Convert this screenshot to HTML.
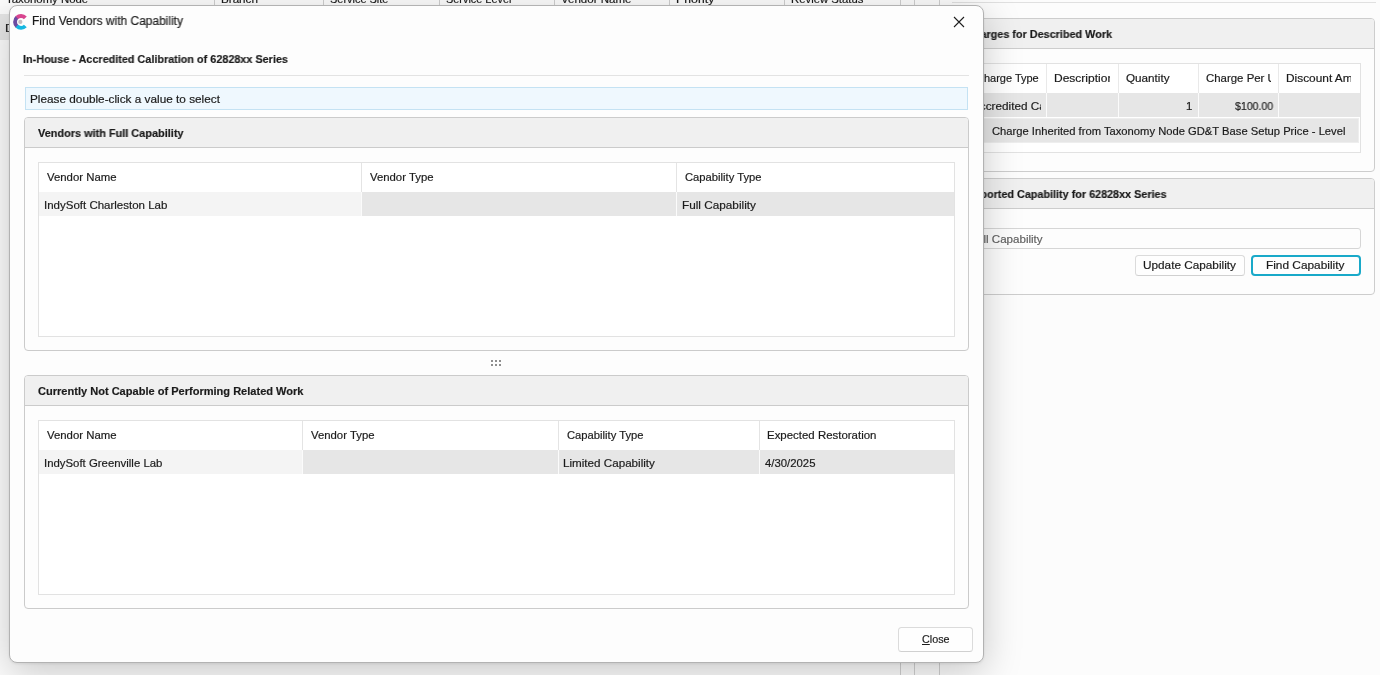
<!DOCTYPE html>
<html><head><meta charset="utf-8">
<style>
*{box-sizing:border-box;margin:0;padding:0}
html,body{width:1380px;height:675px;overflow:hidden;background:#fcfcfc}
body{font-family:"Liberation Sans",sans-serif;font-size:12px;color:#1b1b1b;position:relative}
.abs{position:absolute}
.t{position:absolute;white-space:pre;line-height:16px;height:16px;transform-origin:0 50%;will-change:transform;-webkit-text-stroke:0.18px currentColor}
.clip{position:absolute;height:16px;overflow:hidden}
.bgpanel{position:absolute;border:1px solid #cdcdcd;border-radius:4px;background:#fdfdfd;overflow:hidden}
.bghead{position:absolute;left:0;right:0;top:0;background:#f0f0f0;border-bottom:1px solid #cdcdcd}
#dlg{position:absolute;left:9px;top:5px;width:975px;height:658px;background:#fdfdfd;border:1px solid #b2b2b2;border-radius:8px;box-shadow:0 9px 38px rgba(0,0,0,.21),0 1px 3px rgba(0,0,0,.08)}
.grp{position:absolute;border:1px solid #cbcbcb;border-radius:4px;background:#fdfdfd;overflow:hidden}
.grph{position:absolute;left:0;right:0;top:0;height:30px;background:#f0f0f0;border-bottom:1px solid #cbcbcb}
.grid{position:absolute;border:1px solid #e2e2e2;background:#fff}
.cell{position:absolute;background:#e6e6e6}
.vl{position:absolute;width:1px;background:#e4e4e4}
.btn{position:absolute;border:1px solid #dbdbdb;border-bottom-color:#d0d0d0;border-radius:3.5px;background:#fefefe}
</style></head><body>

<!-- background window: top strip -->
<div class="abs" style="left:0;top:0;width:901px;height:6px;background:#fdfdfd"></div>
<div class="vl" style="left:214px;top:0;height:6px;background:#d0d0d0"></div>
<div class="vl" style="left:323px;top:0;height:6px;background:#d0d0d0"></div>
<div class="vl" style="left:439px;top:0;height:6px;background:#d0d0d0"></div>
<div class="vl" style="left:554px;top:0;height:6px;background:#d0d0d0"></div>
<div class="vl" style="left:669px;top:0;height:6px;background:#d0d0d0"></div>
<div class="vl" style="left:784px;top:0;height:6px;background:#d0d0d0"></div>
<div class="vl" style="left:900px;top:0;height:675px;background:#d0d0d0"></div>
<div class="vl" style="left:914px;top:0;height:675px;background:#d0d0d0"></div>
<div class="vl" style="left:939px;top:0;height:675px;background:#d0d0d0"></div>
<div class="abs" style="left:0;top:14px;width:12px;height:26px;background:#e6e6e6"></div>
<div class="abs" style="left:952px;top:2px;width:424px;height:1px;background:#e0e0e0"></div>

<!-- right panels -->
<div class="bgpanel" style="left:940px;top:18px;width:435px;height:154px"><div class="bghead" style="height:30px"></div></div>
<div class="grid" style="left:940px;top:63px;width:421px;height:90px"></div>
<div class="cell" style="left:941px;top:93px;width:419px;height:24px"></div>
<div class="cell" style="left:941px;top:118px;width:418px;height:25px;border:1px solid #eee"></div>
<div class="vl" style="left:1046px;top:64px;height:29px;background:#e9e9e9"></div><div class="vl" style="left:1046px;top:93px;height:24px;background:#fbfbfb"></div>
<div class="vl" style="left:1118px;top:64px;height:29px;background:#e9e9e9"></div><div class="vl" style="left:1118px;top:93px;height:24px;background:#fbfbfb"></div>
<div class="vl" style="left:1198px;top:64px;height:29px;background:#e9e9e9"></div><div class="vl" style="left:1198px;top:93px;height:24px;background:#fbfbfb"></div>
<div class="vl" style="left:1278px;top:64px;height:29px;background:#e9e9e9"></div><div class="vl" style="left:1278px;top:93px;height:24px;background:#fbfbfb"></div>

<div class="bgpanel" style="left:940px;top:178px;width:435px;height:117px"><div class="bghead" style="height:30px"></div></div>
<div class="abs" style="left:940px;top:228px;width:421px;height:21px;border:1px solid #d6d6d6;border-radius:3px;background:#fdfdfd"></div>
<div class="btn" style="left:1135px;top:255px;width:110px;height:21px"></div>
<div class="btn" style="left:1251px;top:255px;width:110px;height:21px;border:2px solid #19a9c9;border-radius:4px"></div>
<div class="t" style="left:5.60px;top:-9.00px;font-size:10.7px;transform:scaleX(1.0630)">Taxonomy Node</div>
<div class="t" style="left:221.30px;top:-9.00px;font-size:10.7px;transform:scaleX(1.0893)">Branch</div>
<div class="t" style="left:330.30px;top:-9.00px;font-size:10.7px;transform:scaleX(1.0240)">Service Site</div>
<div class="t" style="left:446.30px;top:-9.00px;font-size:10.7px;transform:scaleX(1.0191)">Service Level</div>
<div class="t" style="left:561.30px;top:-9.00px;font-size:10.7px;transform:scaleX(1.0771)">Vendor Name</div>
<div class="t" style="left:676.30px;top:-9.00px;font-size:10.7px;transform:scaleX(1.1543)">Priority</div>
<div class="t" style="left:791.30px;top:-9.00px;font-size:10.7px;transform:scaleX(1.0598)">Review Status</div>
<div class="t" style="left:5.30px;top:20.00px;font-size:10.7px;transform:scaleX(1.2178)">D</div>
<div class="t" style="left:966.30px;top:26.00px;font-size:11px;transform:scaleX(0.9842);font-weight:700">Charges for Described Work</div>
<div class="t" style="left:975.60px;top:70.00px;font-size:10.7px;transform:scaleX(1.0279)">Charge Type</div>
<div class="clip" style="left:1046px;width:64.29999999999995px;top:70.00px"><div class="t" style="left:7.60px;top:0;font-size:10.7px;transform:scaleX(1.1240)">Description</div></div>
<div class="t" style="left:1126.22px;top:70.00px;font-size:10.7px;transform:scaleX(1.0946)">Quantity</div>
<div class="clip" style="left:1198px;width:72.5px;top:70.00px"><div class="t" style="left:7.80px;top:0;font-size:10.7px;transform:scaleX(1.0686)">Charge Per Unit</div></div>
<div class="clip" style="left:1278px;width:73px;top:70.00px"><div class="t" style="left:7.90px;top:0;font-size:10.7px;transform:scaleX(1.1114)">Discount Amount</div></div>
<div class="clip" style="left:940px;width:101px;top:98.00px"><div class="t" style="left:31.80px;top:0;font-size:10.7px;transform:scaleX(1.0989)">Accredited Calibration</div></div>
<div class="t" style="left:1186.36px;top:98.00px;font-size:10.7px;transform:scaleX(1.0683)">1</div>
<div class="t" style="left:1235.18px;top:98.00px;font-size:10.7px;transform:scaleX(0.9850)">$100.00</div>
<div class="t" style="left:992.26px;top:123.00px;font-size:10.7px;transform:scaleX(1.0487)">Charge Inherited from Taxonomy Node GD&amp;T Base Setup Price - Level</div>
<div class="t" style="left:959.80px;top:186.00px;font-size:11px;transform:scaleX(0.9823);font-weight:700">Supported Capability for 62828xx Series</div>
<div class="t" style="left:970.30px;top:231.00px;font-size:10.7px;transform:scaleX(1.0816);color:#5f5f5f">Full Capability</div>
<div class="t" style="left:1142.80px;top:257.00px;font-size:10.7px;transform:scaleX(1.1015)">Update Capability</div>
<div class="t" style="left:1266.34px;top:257.00px;font-size:10.7px;transform:scaleX(1.1089)">Find Capability</div>

<!-- dialog -->
<div id="dlg"></div>
<svg class="abs" style="left:11px;top:12px" width="20" height="20" viewBox="11 12 20 20">
 <g fill="none" stroke-width="3.9">
 <path d="M17.18 17.34 A5.95 5.95 0 0 0 17.18 26.46" stroke="#6b4ca1"/>
 <path d="M25.35 17.84 A5.95 5.95 0 0 0 16.87 17.62" stroke="#d8458f"/>
 <path d="M16.87 26.18 A5.95 5.95 0 0 0 25.35 25.96" stroke="#16b7e1"/>
 </g>
 <circle cx="20.3" cy="21.9" r="2.1" fill="#c4bcc1"/>
</svg>
<svg class="abs" style="left:953px;top:16px" width="12" height="12" viewBox="0 0 12 12"><path d="M1 1 L11 11 M11 1 L1 11" stroke="#1f1f1f" stroke-width="1.1" fill="none"/></svg>

<div class="abs" style="left:24px;top:75px;width:945px;height:1px;background:#e3e3e3"></div>
<div class="abs" style="left:25px;top:87px;width:943px;height:23px;background:#eff8fe;border:1px solid #c4e2f3"></div>

<div class="grp" style="left:24px;top:117px;width:945px;height:234px"><div class="grph"></div></div>
<div class="grid" style="left:38px;top:162px;width:917px;height:175px"></div>
<div class="cell" style="left:39px;top:192px;width:915px;height:24px"></div>
<div class="cell" style="left:39px;top:192px;width:322px;height:24px;background:#f4f4f4"></div>
<div class="vl" style="left:361px;top:163px;height:29px"></div><div class="vl" style="left:361px;top:192px;height:24px;background:#fbfbfb"></div>
<div class="vl" style="left:676px;top:163px;height:29px"></div><div class="vl" style="left:676px;top:192px;height:24px;background:#fbfbfb"></div>

<svg class="abs" style="left:490px;top:359px" width="12" height="8" viewBox="490 359 12 8" shape-rendering="crispEdges"><g fill="#8e8e8e"><rect x="491" y="360" width="2" height="2"/><rect x="495" y="360" width="2" height="2"/><rect x="499" y="360" width="2" height="2"/><rect x="491" y="364" width="2" height="2"/><rect x="495" y="364" width="2" height="2"/><rect x="499" y="364" width="2" height="2"/></g></svg>

<div class="grp" style="left:24px;top:375px;width:945px;height:234px"><div class="grph"></div></div>
<div class="grid" style="left:38px;top:420px;width:917px;height:175px"></div>
<div class="cell" style="left:39px;top:450px;width:915px;height:24px"></div>
<div class="cell" style="left:39px;top:450px;width:263px;height:24px;background:#f4f4f4"></div>
<div class="vl" style="left:302px;top:421px;height:29px"></div><div class="vl" style="left:302px;top:450px;height:24px;background:#fbfbfb"></div>
<div class="vl" style="left:558px;top:421px;height:29px"></div><div class="vl" style="left:558px;top:450px;height:24px;background:#fbfbfb"></div>
<div class="vl" style="left:759px;top:421px;height:29px"></div><div class="vl" style="left:759px;top:450px;height:24px;background:#fbfbfb"></div>

<div class="btn" style="left:898px;top:627px;width:75px;height:25px"></div>
<div class="t" style="left:31.88px;top:13.00px;font-size:12px;transform:scaleX(0.9967)">Find Vendors with Capability</div>
<div class="t" style="left:22.88px;top:51.00px;font-size:11px;transform:scaleX(0.9841);font-weight:700">In-House - Accredited Calibration of 62828xx Series</div>
<div class="t" style="left:29.88px;top:91.00px;font-size:10.7px;transform:scaleX(1.1023)">Please double-click a value to select</div>
<div class="t" style="left:38.20px;top:125.00px;font-size:11px;transform:scaleX(0.9919);font-weight:700">Vendors with Full Capability</div>
<div class="t" style="left:46.70px;top:169.00px;font-size:10.7px;transform:scaleX(1.0634)">Vendor Name</div>
<div class="t" style="left:369.68px;top:169.00px;font-size:10.7px;transform:scaleX(1.0617)">Vendor Type</div>
<div class="t" style="left:684.70px;top:169.00px;font-size:10.7px;transform:scaleX(1.0498)">Capability Type</div>
<div class="t" style="left:43.80px;top:197.00px;font-size:10.7px;transform:scaleX(1.0761)">IndySoft Charleston Lab</div>
<div class="t" style="left:681.80px;top:197.00px;font-size:10.7px;transform:scaleX(1.1009)">Full Capability</div>
<div class="t" style="left:38.20px;top:383.00px;font-size:11px;transform:scaleX(1.0040);font-weight:700">Currently Not Capable of Performing Related Work</div>
<div class="t" style="left:46.70px;top:427.00px;font-size:10.7px;transform:scaleX(1.0634)">Vendor Name</div>
<div class="t" style="left:310.68px;top:427.00px;font-size:10.7px;transform:scaleX(1.0617)">Vendor Type</div>
<div class="t" style="left:566.70px;top:427.00px;font-size:10.7px;transform:scaleX(1.0498)">Capability Type</div>
<div class="t" style="left:766.80px;top:427.00px;font-size:10.7px;transform:scaleX(1.0708)">Expected Restoration</div>
<div class="t" style="left:43.80px;top:455.00px;font-size:10.7px;transform:scaleX(1.0656)">IndySoft Greenville Lab</div>
<div class="t" style="left:562.88px;top:455.00px;font-size:10.7px;transform:scaleX(1.0896)">Limited Capability</div>
<div class="t" style="left:765.20px;top:455.00px;font-size:10.7px;transform:scaleX(1.0621)">4/30/2025</div>
<div class="t" style="left:921.68px;top:631.00px;font-size:10.7px;transform:scaleX(1.0078)"><u>C</u>lose</div>
</body></html>
